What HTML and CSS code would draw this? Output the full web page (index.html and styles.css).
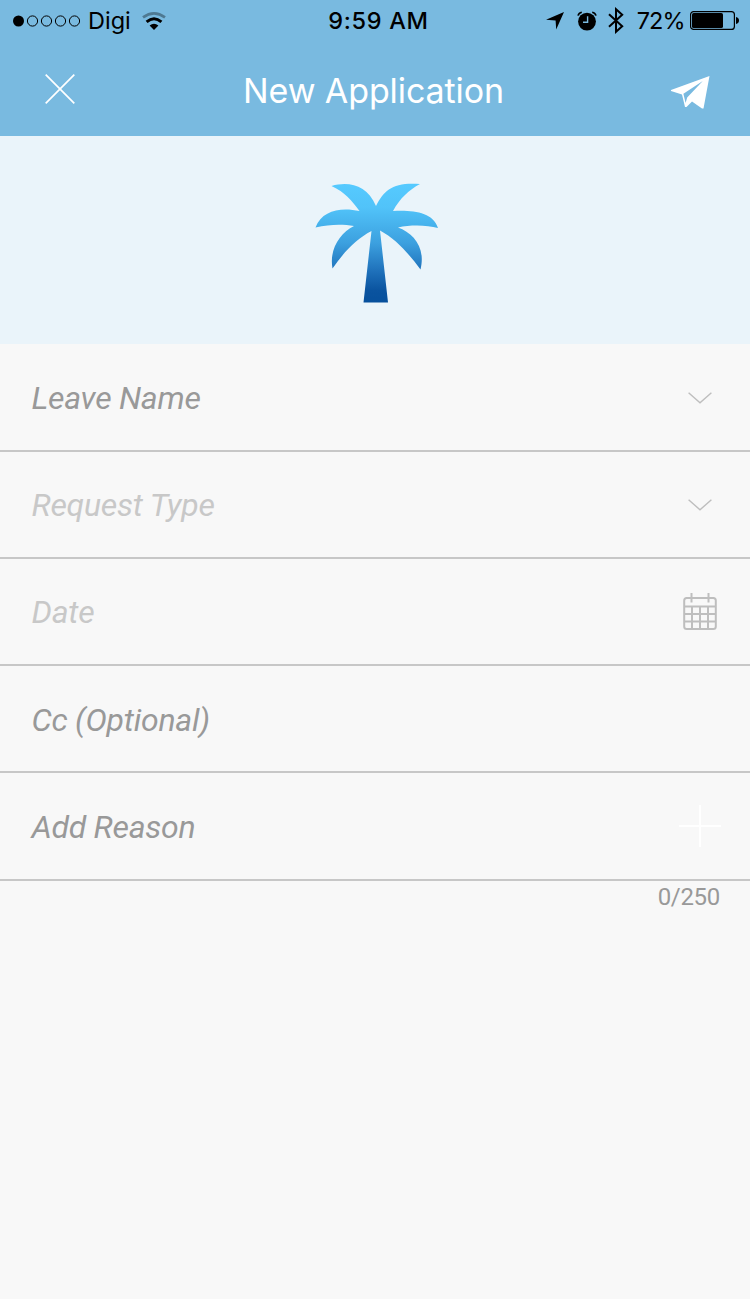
FILE: index.html
```html
<!DOCTYPE html>
<html lang="en">
<head>
<meta charset="UTF-8" />
<meta name="viewport" content="width=device-width, initial-scale=1" />
<title>New Application</title>
<link rel="stylesheet" href="styles.css">
</head>
<body>

<header class="topBar">
  <div class="statusBar">
    <div class="statusLeft">
      <svg class="signal" width="68" height="12" viewBox="0 0 68 12">
        <circle cx="5.5" cy="6" r="5.5" />
        <g fill="none" stroke="#000" stroke-width="1">
          <circle cx="19.5" cy="6" r="5.1" />
          <circle cx="33.5" cy="6" r="5.1" />
          <circle cx="47.5" cy="6" r="5.1" />
          <circle cx="61.5" cy="6" r="5.1" />
        </g>
      </svg>
      <span class="carrier">Digi</span>
      <svg class="wifi" width="24" height="18" viewBox="0 0 24 18">
        <path d="M1 5.4Q12-2.6 23 5.4" fill="none" stroke="#000" stroke-opacity=".35" stroke-width="2.7" />
        <path d="M4.6 9.8Q12 3.6 19.4 9.8" fill="none" stroke="#000" stroke-width="3" />
        <path d="M7.6 13.6Q12 10 16.4 13.6L12 18Z" />
      </svg>
    </div>
    <div class="clock">9:59 AM</div>
    <div class="statusRight">
      <svg class="location" width="18" height="18" viewBox="0 0 18 18">
        <path d="M18 0L10.2 17.6L9.6 8.4L0 7.8Z" />
      </svg>
      <svg class="alarm" width="20" height="20" viewBox="0 0 20 20">
        <circle cx="10" cy="10.6" r="8.9" />
        <path d="M1 4.6Q1.8 1.8 4.8 1.2M19 4.6Q18.2 1.8 15.2 1.2" fill="none" stroke="#000" stroke-width="1.6" />
        <path d="M10.6 5.2V11.2H6" fill="none" stroke="#79bae0" stroke-width="1.4" />
      </svg>
      <svg class="bluetooth" width="16" height="27" viewBox="0 0 16 27">
        <path d="M1 7.2L14.2 19.2L8 24.8V2.2L14.2 7.8L1 19.8" fill="none" stroke="#000" stroke-width="2" />
      </svg>
      <span class="percent">72%</span>
      <svg class="battery" width="49" height="19" viewBox="0 0 49 19">
        <rect x=".6" y=".6" width="43.8" height="17.8" rx="3" fill="none" stroke="#000" stroke-width="1.2" />
        <rect x="2" y="2" width="31" height="15" rx="1.6" />
        <path d="M46 6Q49 6.6 49 9.5T46 13Z" />
      </svg>
    </div>
  </div>

  <div class="navBar">
    <svg class="closeBtn" width="30" height="30" viewBox="0 0 30 30">
      <path d="M.7.7L29.3 29.3M29.3.7L.7 29.3" fill="none" stroke="#fff" stroke-width="1.7" />
    </svg>
    <h1 class="navTitle">New Application</h1>
    <svg class="sendBtn" width="39" height="33" viewBox="0 0 39 33">
      <path fill="#fff" d="M38.5 0L32.5 32.5H31L21 25.5L15.5 31H14L11 18.5L0 15V14Z" />
      <path fill="#79bae0" d="M31.8 5L12.4 17.8L14.6 27L16.2 21.5Z" />
    </svg>
  </div>
</header>

<section class="banner">
  <svg class="palm" width="124" height="121" viewBox="315 183 124 121">
    <defs>
      <linearGradient id="palmFill" x1="0" y1="0" x2="0" y2="1">
        <stop offset="0" stop-color="#56caff" />
        <stop offset=".2" stop-color="#51c3f9" />
        <stop offset=".5" stop-color="#3ca0df" />
        <stop offset=".75" stop-color="#1d6eb8" />
        <stop offset=".9" stop-color="#0a539f" />
        <stop offset="1" stop-color="#07509c" />
      </linearGradient>
    </defs>
    <path fill="url(#palmFill)" d="M331.5 186C349 181 367 185 376 206C384 190 393 182 420 184C409 190 400 198 393 211C413 210 433 212 438 228C427 225 411 224.500 398 227.500C413 233 426 247 420.500 269.500C409 254 396 239 380 230.500L388 302.500H363.500L371.500 231C356 239 344 252 332.500 268.500C329 249 340 233 354 226C343 224 330 224 315.500 227.500C322 210 341 207 359.500 211C352 201 345 192 331.500 186Z" />
  </svg>
</section>

<main class="form">
  <div class="field">
    <span class="label">Leave Name</span>
    <svg class="arrow" width="24" height="12" viewBox="0 0 24 12">
      <path d="M.6.8L12 10.8L23.4.8" fill="none" stroke="#bebebe" stroke-width="1.4" />
    </svg>
  </div>
  <div class="field disabled">
    <span class="label">Request Type</span>
    <svg class="arrow" width="24" height="12" viewBox="0 0 24 12">
      <path d="M.6.8L12 10.8L23.4.8" fill="none" stroke="#bebebe" stroke-width="1.4" />
    </svg>
  </div>
  <div class="field disabled">
    <span class="label">Date</span>
    <svg class="calendar" width="34" height="37" viewBox="0 0 34 37">
      <g fill="none" stroke="#bebebe" stroke-width="2">
        <rect x="1.2" y="5" width="31.6" height="31" rx="2.5" />
        <path d="M1 13.5H33M1 21H33M1 28.5H33M9 13.5V36M17 13.5V36M25 13.5V36" />
      </g>
      <path d="M8.5 0V9.5M25.5 0V9.5" stroke="#f8f8f8" stroke-width="4" />
      <path d="M8.5 0V9.5M25.5 0V9.5M3 5H31" stroke="#bebebe" stroke-width="2" />
    </svg>
  </div>
  <div class="field">
    <span class="label">Cc (Optional)</span>
  </div>
  <div class="field">
    <span class="label">Add Reason</span>
    <svg class="plus" width="42" height="42" viewBox="0 0 42 42">
      <path d="M21 0V42M0 21H42" stroke="#fff" stroke-width="2" />
    </svg>
  </div>
  <div class="counter">0/250</div>
</main>

</body>
</html>
```
FILE: styles.css
```css
* {
  box-sizing: border-box;
}

body {
  margin: 0;
  min-height: 100vh;
  background-color: #f8f8f8;
  font-family: Roboto, sans-serif;
}

svg {
  display: block;
  flex: none;
}

.topBar {
  height: 136px;
  background-color: #79bae0;
  font-family: Inter, sans-serif;
}

.statusBar {
  display: grid;
  grid-template-columns: 1fr auto 1fr;
  align-items: center;
  height: 41px;
  padding: 0 11px 0 17px;
  font-size: 23.5px;
  line-height: 41px;
}

.statusLeft, .statusRight {
  display: flex;
  align-items: center;
}

.statusLeft {
  margin-left: -4px;
}

.statusRight {
  justify-content: flex-end;
}

.carrier {
  margin-left: 7px;
}

.wifi {
  margin-left: 11px;
}

.clock {
  padding-left: 1px;
  font-weight: 500;
  letter-spacing: 0.7px;
}

.alarm {
  margin-left: 13px;
}

.bluetooth {
  margin-left: 11px;
}

.percent {
  margin-left: 13px;
  letter-spacing: -1px;
}

.battery {
  margin-left: 5.5px;
}

.navBar {
  display: flex;
  align-items: center;
  justify-content: space-between;
  height: 95px;
  padding: 0 40px 0 45px;
}

.closeBtn {
  margin-top: 1px;
}

.navTitle {
  margin: 4px 0 0 1px;
  color: #fff;
  font-size: 34px;
  font-weight: 400;
  letter-spacing: -0.1px;
  line-height: 44px;
}

.sendBtn {
  margin-top: 7px;
}

.banner {
  display: flex;
  justify-content: center;
  height: 208px;
  padding: 47px 0 0 4px;
  background-color: #eaf4fa;
}

.form {
  padding-top: 0.4px;
}

.field {
  display: flex;
  align-items: center;
  justify-content: space-between;
  height: 107.25px;
  padding: 1px 30px 0 31.5px;
  border-bottom: 2px solid #c7c7c7;
  color: #999;
}

.disabled {
  color: #c8c8c8;
}

.label {
  padding-top: 0.5px;
  font-size: 32px;
  font-style: italic;
  letter-spacing: -0.25px;
  line-height: 40px;
}

.arrow {
  margin: 1px 8px 0 0;
}

.calendar {
  margin: -2px 3px 0 0;
}

.plus {
  margin: -2px -1px 0 0;
}

.counter {
  padding: 2px 30px 0 0;
  color: #999;
  font-size: 24px;
  letter-spacing: -0.3px;
  line-height: 28px;
  text-align: right;
}
```
